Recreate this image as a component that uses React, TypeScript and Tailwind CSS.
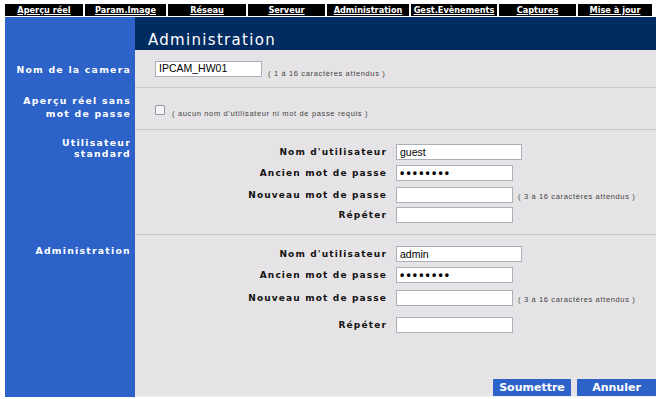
import React from "react";

const navItems: [string, number][] = [
  ["Aperçu réel", 78],
  ["Param.Image", 81],
  ["Réseau", 78],
  ["Serveur", 77],
  ["Administration", 82],
  ["Gest.Evènements", 86],
  ["Captures", 77],
  ["Mise à jour", 74],
];

const labelFont = { fontFamily: '"DejaVu Sans", Verdana, sans-serif' };
const arial = { fontFamily: '"Liberation Sans", Arial, sans-serif' };

function TextBox({ value, w, pass }: { value: string; w: number; pass?: boolean }) {
  return (
    <div
      className="h-[16px] bg-white border border-[#a9b0b8] flex items-center pl-[3px] overflow-hidden"
      style={{ width: w }}
    >
      {pass ? (
        <span className="text-[12px] font-bold leading-none tracking-[2.2px] text-black" style={arial}>
          {value}
        </span>
      ) : (
        <span className="text-[10.5px] leading-none text-black" style={arial}>
          {value}
        </span>
      )}
    </div>
  );
}

function Hint({ children }: { children: React.ReactNode }) {
  return (
    <span className="text-[7.5px] leading-none tracking-[0.65px] text-[#444]" style={arial}>
      {children}
    </span>
  );
}

function Field({
  label,
  value,
  w,
  pass,
  hint,
  h,
}: {
  label: string;
  value: string;
  w: number;
  pass?: boolean;
  hint?: string;
  h: number;
}) {
  return (
    <div className="flex items-start" style={{ height: h }}>
      <div
        className="w-[252px] h-[16px] flex items-center justify-end text-[9px] font-bold tracking-[1.15px] text-[#111] leading-none"
        style={labelFont}
      >
        {label}
      </div>
      <div className="ml-[9px]">
        <TextBox value={value} w={w} pass={pass} />
      </div>
      {hint && (
        <div className="ml-[5px] h-[16px] flex items-center pt-[3px]">
          <Hint>{hint}</Hint>
        </div>
      )}
    </div>
  );
}

function SideLabel({ children, className = "" }: { children: React.ReactNode; className?: string }) {
  return (
    <div
      className={`w-[130px] shrink-0 bg-[#2d62c9] text-white text-[9.3px] font-bold tracking-[1.25px] text-right pr-[4px] leading-[13px] ${className}`}
      style={labelFont}
    >
      {children}
    </div>
  );
}

export default function App() {
  return (
    <div className="w-[657px] h-[399px] bg-white overflow-hidden">
      <div className="pl-[5px] pt-[4px]">
        {/* Top navigation */}
        <div className="w-[647px] flex gap-[2px] h-[12px]">
          {navItems.map(([n, w]) => (
            <div key={n} className="bg-black flex items-center justify-center shrink-0" style={{ width: w }}>
              <span
                className="text-white text-[8.2px] font-bold underline leading-none whitespace-nowrap"
                style={labelFont}
              >
                {n}
              </span>
            </div>
          ))}
        </div>

        {/* Main table */}
        <div className="w-[651px] mt-[1px] flex flex-col">
          {/* Header */}
          <div className="flex h-[33px]">
            <div className="w-[130px] bg-[#2d62c9]" />
            <div className="flex-1 bg-[#002c61] flex items-end pl-[13px] pb-[2px]">
              <span
                className="text-white text-[15px] tracking-[1.3px] leading-none"
                style={labelFont}
              >
                Administration
              </span>
            </div>
          </div>

          {/* Camera name */}
          <div className="flex h-[38px]">
            <SideLabel className="flex items-center justify-end">Nom de la camera</SideLabel>
            <div className="flex-1 bg-[#e6e3e6] border-b border-[#c9c5c9] flex items-center pl-[20px]">
              <TextBox value="IPCAM_HW01" w={107} />
              <div className="ml-[6px] pt-[2px]">
                <Hint>( 1 à 16 caractères attendus )</Hint>
              </div>
            </div>
          </div>

          {/* Live view without password */}
          <div className="flex h-[42px]">
            <SideLabel className="flex flex-col justify-center items-end pb-[4px]">
              <span>Aperçu réel sans</span>
              <span>mot de passe</span>
            </SideLabel>
            <div className="flex-1 bg-[#e6e3e6] border-b border-[#c9c5c9] flex items-center pl-[20px] pt-[3px]">
              <div className="w-[10px] h-[10px] bg-[#f4f4f6] border border-[#8f9aa8] rounded-[1px]" />
              <div className="ml-[7px]">
                <Hint>( aucun nom d'utilisateur ni mot de passe requis )</Hint>
              </div>
            </div>
          </div>

          {/* Standard user */}
          <div className="flex h-[105px]">
            <SideLabel className="pt-[6px] flex flex-col items-end">
              <span>Utilisateur</span>
              <span className="leading-[10px]">standard</span>
            </SideLabel>
            <div className="flex-1 bg-[#e6e3e6] border-b border-[#c9c5c9] pt-[14px] flex flex-col">
              <Field label="Nom d'utilisateur" value="guest" w={126} h={21} />
              <Field label="Ancien mot de passe" value="••••••••" w={117} pass h={22} />
              <Field
                label="Nouveau mot de passe"
                value=""
                w={117}
                h={20}
                hint="( 3 à 16 caractères attendus )"
              />
              <Field label="Répéter" value="" w={117} h={16} />
            </div>
          </div>

          {/* Administrator */}
          <div className="flex h-[137px]">
            <SideLabel className="pt-[9px]">Administration</SideLabel>
            <div className="flex-1 bg-[#e6e3e6] pt-[11px] flex flex-col">
              <Field label="Nom d'utilisateur" value="admin" w={126} h={21} />
              <Field label="Ancien mot de passe" value="••••••••" w={117} pass h={23} />
              <Field
                label="Nouveau mot de passe"
                value=""
                w={117}
                h={27}
                hint="( 3 à 16 caractères attendus )"
              />
              <Field label="Répéter" value="" w={117} h={16} />
            </div>
          </div>

          {/* Buttons */}
          <div className="flex h-[25px]">
            <div className="w-[130px] bg-[#2d62c9]" />
            <div className="flex-1 bg-[#e6e3e6] border-b border-[#f2f0f2] flex items-end justify-end gap-[6px]">
              <div
                className="w-[78px] h-[17px] bg-[#2d62c9] flex items-center justify-center text-white text-[11px] font-bold leading-none"
                style={labelFont}
              >
                Soumettre
              </div>
              <div
                className="w-[79px] h-[17px] bg-[#2d62c9] flex items-center justify-center text-white text-[11px] font-bold leading-none"
                style={labelFont}
              >
                Annuler
              </div>
            </div>
          </div>
        </div>
      </div>
    </div>
  );
}
